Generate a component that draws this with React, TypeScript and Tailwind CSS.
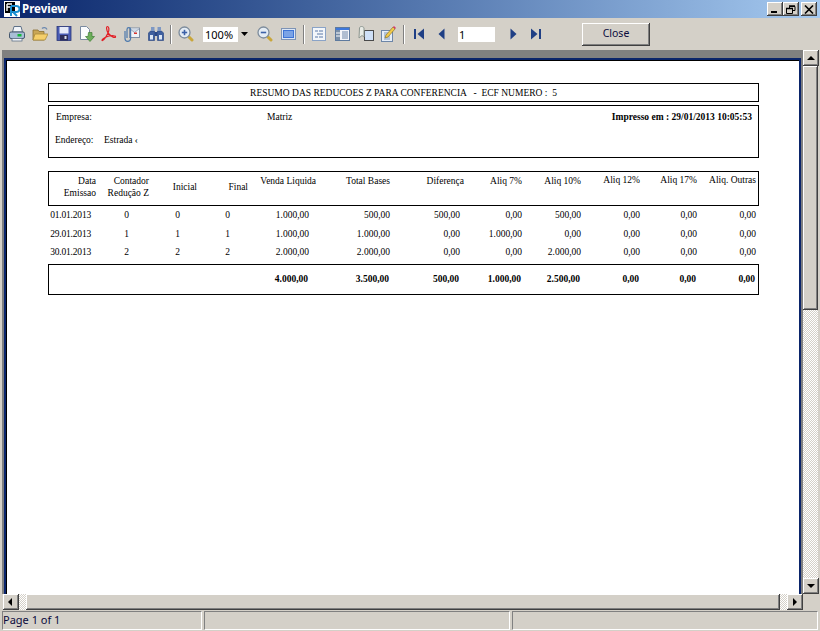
import React from "react";

const bevel = "shadow-[inset_-1px_-1px_#404040,inset_1px_1px_#ffffff,inset_-2px_-2px_#808080]";
const checker = "bg-[repeating-conic-gradient(#ffffff_0_25%,#d4d0c8_0_50%)] bg-[length:2px_2px]";
const cols = "grid grid-cols-[47px_54px_50px_49px_67px_75px_73px_59px_59px_59px_57px_59px]";
const ui = "font-[family-name:Noto_Sans,sans-serif]";

function Ic({ w = 16, ml, children }: { w?: number; ml: string; children: React.ReactNode }) {
  return (
    <svg width={w} height={18} viewBox={`0 0 ${w} 18`} className={`${ml} shrink-0`}>
      {children}
    </svg>
  );
}

function Sep({ ml }: { ml: string }) {
  return <div className={`${ml} w-[2px] h-[19px] bg-[#ffffff] border-l border-[#808080] shrink-0`} />;
}

function Tri({ d }: { d: "u" | "d" | "l" | "r" }) {
  const p = { u: "1,6 9,6 5,2", d: "1,2 9,2 5,6", l: "6,0 6,8 2,4", r: "3,0 3,8 7,4" }[d];
  return (
    <svg width="10" height="8" viewBox="0 0 10 8">
      <polygon points={p} fill="#000" />
    </svg>
  );
}

function ScrollBtn({ d }: { d: "u" | "d" | "l" | "r" }) {
  return (
    <div className={`w-[16px] h-[16px] bg-[#d4d0c8] ${bevel} flex items-center justify-center shrink-0`}>
      <Tri d={d} />
    </div>
  );
}

function Magnifier({ minus, ml }: { minus?: boolean; ml: string }) {
  return (
    <Ic ml={ml}>
      <path d="M10.500 11.500 L14 15" stroke="#c9a63a" strokeWidth="3" strokeLinecap="round" />
      <circle cx="6.500" cy="7.500" r="5.500" fill="#e4ecf4" stroke="#7d8c9c" strokeWidth="1.300" />
      <path d="M3.800 7.500H9.200" stroke="#3c62a8" strokeWidth="1.600" />
      {!minus && <path d="M6.500 4.800V10.200" stroke="#3c62a8" strokeWidth="1.600" />}
    </Ic>
  );
}

function Cell({ c, b, children }: { c: string; b?: boolean; children?: React.ReactNode }) {
  return <div className={`${c} text-right whitespace-nowrap ${b ? "font-bold" : ""}`}>{children}</div>;
}

const rows = [
  ["01.01.2013", "0", "0", "0", "1.000,00", "500,00", "500,00", "0,00", "500,00", "0,00", "0,00", "0,00"],
  ["29.01.2013", "1", "1", "1", "1.000,00", "1.000,00", "0,00", "1.000,00", "0,00", "0,00", "0,00", "0,00"],
  ["30.01.2013", "2", "2", "2", "2.000,00", "2.000,00", "0,00", "0,00", "2.000,00", "0,00", "0,00", "0,00"],
];
const rowPads = ["pr-[5px] tracking-[-0.2px]", "pr-[21px]", "pr-[20px]", "pr-[19px]", "pr-[7px]", "pr-[1px]", "pr-[4px]", "pr-[1px]", "pr-[1px]", "pr-[1px]", "pr-[1px]", "pr-[1px]"];
const totalPads = ["", "", "", "", "pr-[9px]", "pr-[3px]", "pr-[6px]", "pr-[3px]", "pr-[3px]", "pr-[3px]", "pr-[3px]", "pr-[3px]"];

export default function App() {
  return (
    <div className="w-[820px] h-[631px] bg-[#d4d0c8] flex flex-col overflow-hidden">
      {/* Title bar */}
      <div className="h-[18px] shrink-0 bg-gradient-to-r from-[#0a246a] to-[#a6caf0] flex items-center pl-[4px] pr-[3px]">
        <svg width="16" height="16" viewBox="0 0 16 16" className="shrink-0">
          <rect width="16" height="16" fill="#fff" />
          <rect x="1" y="1" width="10" height="11" fill="#000" />
          <path d="M3 3h5M3 3v7M3 6h4" stroke="#fff" strokeWidth="1.400" fill="none" />
          <path d="M7 5h5.500a2.500 2.500 0 0 1 0 6H9l4 4M7 5v10" stroke="#1a8fd0" strokeWidth="2" fill="none" />
        </svg>
        <span className={`ml-[2px] text-white font-bold text-[11.5px] ${ui} leading-none`}>Preview</span>
        <div className="ml-auto flex items-center">
          <div className={`w-[16px] h-[14px] bg-[#d4d0c8] ${bevel} relative`}>
            <div className="absolute left-[4px] top-[9px] w-[6px] h-[2px] bg-black" />
          </div>
          <div className={`w-[16px] h-[14px] bg-[#d4d0c8] ${bevel} flex items-center justify-center`}>
            <svg width="10" height="9" viewBox="0 0 10 9">
              <path d="M3.500 3V1.500h5.500v4h-2M0.500 3.500h6v5h-6zM0.500 3.500h6" stroke="#000" fill="none" />
              <path d="M3 1h6M0 3.500h7" stroke="#000" strokeWidth="1.400" />
            </svg>
          </div>
          <div className={`ml-[2px] w-[16px] h-[14px] bg-[#d4d0c8] ${bevel} flex items-center justify-center`}>
            <svg width="10" height="9" viewBox="0 0 10 9">
              <path d="M1 0.500L9 8.500M9 0.500L1 8.500" stroke="#000" strokeWidth="1.600" />
            </svg>
          </div>
        </div>
      </div>

      {/* Toolbar */}
      <div className="h-[32px] shrink-0 flex items-center">
        <Ic ml="ml-[9px]">
          <path d="M5 1.500h7l1.500 5.500h-10z" fill="#f2f5f9" stroke="#5f7188" />
          <rect x="0.500" y="7" width="15" height="6.500" rx="1.500" fill="#a9bed6" stroke="#46586e" />
          <rect x="8.500" y="9" width="4" height="2.500" fill="#14b838" />
          <rect x="3" y="13.500" width="10" height="2.500" fill="#f4f6f9" stroke="#5f7188" strokeWidth=".8" />
        </Ic>
        <Ic ml="ml-[7px]">
          <path d="M10 3.500a3 3 0 0 1 5 1" stroke="#6d8ab0" fill="none" strokeWidth="1.200" />
          <path d="M1 5h5l1 1.500h5V15H1z" fill="#c9a656" stroke="#8a7030" strokeWidth=".8" />
          <path d="M3 9h13l-3 6H1z" fill="#f5cf6a" stroke="#a98a3a" strokeWidth=".8" />
        </Ic>
        <Ic ml="ml-[8px]">
          <rect x="1" y="1.500" width="14" height="14" fill="#4a5cb4" stroke="#2a3678" strokeWidth=".8" />
          <rect x="3.500" y="2" width="9" height="6.500" fill="#e6eaf8" />
          <rect x="4" y="10" width="8" height="5.500" fill="#2c2c58" />
          <rect x="8.500" y="11" width="2" height="3" fill="#d9dde8" />
        </Ic>
        <Ic ml="ml-[7px]">
          <path d="M1.500 1.500h6l3 3v10h-9z" fill="#fbfcfe" stroke="#7a8aa0" />
          <path d="M9.500 7.500h3.500v4h2.500L11 16.500 6.500 11.500H9z" fill="#6cae5a" stroke="#3f7d37" strokeWidth=".7" />
        </Ic>
        <Ic ml="ml-[6px]">
          <path d="M6.500 1.500C5 1.500 5.500 5 7 8C5.500 11 3 15 1.500 15.500C0 16 2 12.500 8 11C11 10.500 15 10.500 14.500 12C14 13.500 10 11.500 7 8C8.500 5 8 1.500 6.500 1.500z" fill="none" stroke="#e21f26" strokeWidth="1.200" />
        </Ic>
        <Ic ml="ml-[7px]">
          <rect x="5.500" y="3" width="10" height="9.500" fill="#eef2f7" stroke="#7f8ea3" />
          <path d="M5.500 3.500l5 4 5-4" fill="#cfd8e4" stroke="#7f8ea3" strokeWidth=".7" />
          <rect x="10" y="7.500" width="3" height="1.500" fill="#d9342c" />
          <path d="M1 6v7.500a2.800 2.800 0 0 0 5.600 0V4.500a1.800 1.800 0 0 0-3.600 0v8.500" fill="none" stroke="#4c79ad" strokeWidth="1.200" />
        </Ic>
        <Ic ml="ml-[8px]">
          <path d="M2.500 6h4v9.500H0.500V8zM9.500 6h4l2 2v7.500h-6z" fill="#3f5f9f" stroke="#23407c" strokeWidth=".6" />
          <rect x="3" y="2" width="3.500" height="4" fill="#7e98c4" />
          <rect x="9.500" y="2" width="3.500" height="4" fill="#7e98c4" />
          <rect x="6.500" y="7" width="3" height="4" fill="#28488a" />
          <rect x="2" y="10" width="3" height="4.500" fill="#dce6f5" />
          <rect x="11" y="10" width="3" height="4.500" fill="#dce6f5" />
        </Ic>
        <Sep ml="ml-[6px]" />
        <Magnifier ml="ml-[6px]" />
        <div className="ml-[9px] w-[47px] h-[15px] bg-white flex items-center shrink-0">
          <span className={`flex-1 pl-[2px] text-[11px] text-black leading-none ${ui}`}>100%</span>
          <div className="w-[12px] h-[15px] bg-[#d4d0c8] flex items-center justify-center">
            <svg width="7" height="4" viewBox="0 0 7 4"><polygon points="0,0 7,0 3.500,4" fill="#000" /></svg>
          </div>
        </div>
        <Magnifier minus ml="ml-[7px]" />
        <Ic ml="ml-[8px]" w={15}>
          <rect x="0.500" y="3.500" width="14" height="11" fill="#dbe6f5" stroke="#7d93b5" />
          <rect x="2" y="5" width="11" height="8" fill="#3d74d6" />
          <path d="M3 7h9M3 9h9M3 11h9" stroke="#b9d2f6" />
        </Ic>
        <Sep ml="ml-[7px]" />
        <Ic ml="ml-[7px]" w={14}>
          <rect x="0.500" y="2.500" width="13" height="13" fill="#f3f6fa" stroke="#8aa3c7" />
          <path d="M3 6h3M7 6h4M5 9h6M3 12h3M7 12h4" stroke="#5a78a8" />
        </Ic>
        <Ic ml="ml-[9px]" w={15}>
          <rect x="0.500" y="2.500" width="14" height="13" fill="#f3f6fa" stroke="#5e7a9e" />
          <rect x="1" y="3" width="13" height="2" fill="#3e78dc" />
          <rect x="1" y="5" width="4" height="10" fill="#7a8fa8" />
          <path d="M1 8h4M1 11h4" stroke="#fff" />
          <path d="M7 7h6M7 9h6M7 11h6M7 13h6" stroke="#6d86a8" />
        </Ic>
        <Ic ml="ml-[8px]">
          <rect x="6.500" y="5.500" width="9" height="10" fill="#cfe0f7" stroke="#4a4a4a" />
          <path d="M1.500 3c0-2 4-2 4.500 0v9l-2-1.500-3 2.500z" fill="#e8ebe6" stroke="#8d9690" />
        </Ic>
        <Ic ml="ml-[7px]" w={15}>
          <rect x="0.500" y="5.500" width="11" height="11" fill="#e6eef8" stroke="#6d86a8" />
          <path d="M3 8h6M3 10h6M3 12h6M3 14h6" stroke="#7f97b8" />
          <path d="M5 10l7-8 2 2-7 8-3 1z" fill="#f1c94a" stroke="#7d6a20" strokeWidth=".6" />
          <path d="M12 2l1-1 2 2-1 1z" fill="#d6356f" />
        </Ic>
        <Sep ml="ml-[7px]" />
        <Ic ml="ml-[9px]" w={11}>
          <rect x="0" y="4" width="2" height="10" fill="#1f3f85" />
          <polygon points="10,3.500 10,14.500 3.500,9" fill="#1f3f85" />
        </Ic>
        <Ic ml="ml-[13px]" w={7}>
          <polygon points="6.500,3.500 6.500,14.500 0.500,9" fill="#1f3f85" />
        </Ic>
        <div className={`ml-[13px] w-[37px] h-[15px] bg-white flex items-center shrink-0 pl-[1px] text-[11px] leading-none text-black ${ui}`}>1</div>
        <Ic ml="ml-[15px]" w={7}>
          <polygon points="0.500,3.500 0.500,14.500 6.500,9" fill="#1f3f85" />
        </Ic>
        <Ic ml="ml-[13px]" w={11}>
          <polygon points="1,3.500 1,14.500 7.500,9" fill="#1f3f85" />
          <rect x="9" y="4" width="2" height="10" fill="#1f3f85" />
        </Ic>
        <div className={`ml-[41px] w-[68px] h-[23px] bg-[#d4d0c8] ${bevel} flex items-center justify-center text-[10.5px] text-[#0a0a3c] ${ui} shrink-0`}>
          Close
        </div>
      </div>

      {/* Main area */}
      <div className="flex-1 min-h-0 flex pl-[2px] pr-[2px]">
        <div className="flex-1 min-w-0 flex flex-col">
          <div className="flex-1 min-h-0 bg-[#808080] pt-[8px] pl-[2px] pr-[2px]">
            <div className="h-full border-t-2 border-l-2 border-r-2 border-[#0a246a]">
              <div className="h-full bg-white border-t border-l border-black pt-[22px] pl-[41px] pr-[40px] text-[9.5px] leading-[12px] text-black font-[family-name:Liberation_Serif,serif]">
                <div className="h-[19px] border border-black flex items-center justify-center whitespace-pre">
                  RESUMO DAS REDUCOES Z PARA CONFERENCIA   -  ECF NUMERO :  5
                </div>
                <div className="mt-[3px] h-[53px] border border-black flex flex-col pl-[6px] pr-[6px] pt-[5px]">
                  <div className="flex items-center h-[12px]">
                    <span className="w-[212px] pl-[1px]">Empresa:</span>
                    <span>Matriz</span>
                    <span className="ml-auto font-bold">Impresso em : 29/01/2013 10:05:53</span>
                  </div>
                  <div className="flex items-center h-[12px] mt-[11px]">
                    <span className="w-[49px]">Endereço:</span>
                    <span>Estrada ‹</span>
                  </div>
                </div>
                <div className="mt-[13px] h-[35px] border border-black pt-[3px]">
                  <div className={cols}>
                    <Cell c=""><div>Data</div><div>Emissao</div></Cell>
                    <Cell c="pr-[1px]"><div>Contador</div><div>Redução Z</div></Cell>
                    <Cell c="pr-[3px] pt-[6px]">Inicial</Cell>
                    <Cell c="pr-[1px] pt-[6px]">Final</Cell>
                    <Cell c="">Venda Liquida</Cell>
                    <Cell c="pr-[1px]">Total Bases</Cell>
                    <Cell c="">Diferença</Cell>
                    <Cell c="pr-[1px]">Aliq 7%</Cell>
                    <Cell c="pr-[1px]">Aliq 10%</Cell>
                    <Cell c="pr-[1px] -mt-[1px]">Aliq 12%</Cell>
                    <Cell c="pr-[1px] -mt-[1px]">Aliq 17%</Cell>
                    <Cell c="pr-[1px] -mt-[1px]">Aliq. Outras</Cell>
                  </div>
                </div>
                <div className="h-[58px] pl-[1px]">
                  {rows.map((r) => (
                    <div key={r[0]} className={`${cols} h-[18.5px] items-center`}>
                      {r.map((v, i) => (
                        <Cell key={i} c={rowPads[i]}>{v}</Cell>
                      ))}
                    </div>
                  ))}
                </div>
                <div className="h-[31px] border border-black pl-[1px] pb-[1px] flex items-center">
                  <div className={`${cols} w-full`}>
                    {["", "", "", "", "4.000,00", "3.500,00", "500,00", "1.000,00", "2.500,00", "0,00", "0,00", "0,00"].map((v, i) => (
                      <Cell key={i} b c={totalPads[i]}>{v}</Cell>
                    ))}
                  </div>
                </div>
              </div>
            </div>
          </div>
          {/* Horizontal scrollbar */}
          <div className="h-[16px] shrink-0 flex pl-[1px]">
            <ScrollBtn d="l" />
            <div className={`w-[7px] ${checker}`} />
            <div className={`flex-1 bg-[#d4d0c8] ${bevel}`} />
            <div className={`w-[7px] ${checker}`} />
            <ScrollBtn d="r" />
          </div>
        </div>
        {/* Vertical scrollbar */}
        <div className="w-[15px] shrink-0 flex flex-col pb-[16px]">
          <ScrollBtn d="u" />
          <div className={`h-[244px] bg-[#d4d0c8] ${bevel}`} />
          <div className={`flex-1 ${checker}`} />
          <ScrollBtn d="d" />
        </div>
      </div>

      {/* Status bar */}
      <div className={`h-[20px] shrink-0 mt-[1px] flex gap-[2px] pl-[2px] pr-[2px] pb-[1px] text-[11px] text-[#0a0a3c] ${ui}`}>
        <div className="w-[200px] border-t border-l border-[#808080] border-b-white border-r-white border-b border-r flex items-center">Page 1 of 1</div>
        <div className="w-[306px] border-t border-l border-[#808080] border-b-white border-r-white border-b border-r" />
        <div className="flex-1 border-t border-l border-[#808080] border-b-white border-r-white border-b border-r" />
      </div>
    </div>
  );
}
